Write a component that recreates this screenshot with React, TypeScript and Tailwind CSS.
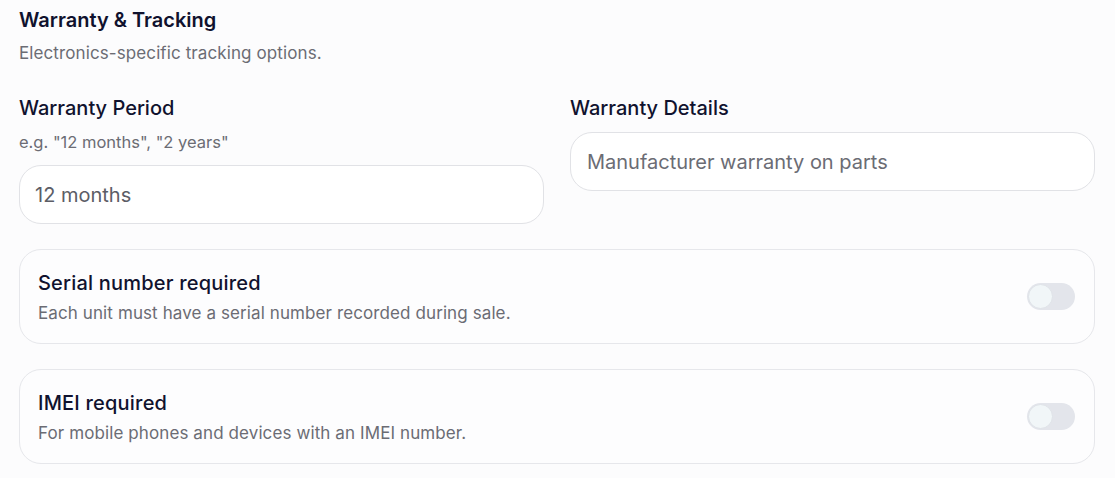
import React from "react";

function Toggle() {
  return (
    <div className="w-[48px] h-[27px] rounded-full bg-[#e3e5eb] p-[1px] flex items-center shrink-0">
      <div className="w-[25px] h-[25px] rounded-full bg-[#f1f6f8] border border-[#dfe3e8]" />
    </div>
  );
}

function ToggleCard({ title, desc }: { title: string; desc: string }) {
  return (
    <div className="h-[95px] rounded-[22px] border border-[#e6e7eb] bg-[#fdfdfe] flex items-center justify-between pl-[18px] pr-[19px]">
      <div className="flex flex-col">
        <div className="text-[20px] leading-[28px] font-medium text-[#10122e] tracking-[0.01em]">{title}</div>
        <div className="text-[17px] leading-[24px] text-[#6b6c74] mt-[4px] tracking-[0.006em]">{desc}</div>
      </div>
      <Toggle />
    </div>
  );
}

export default function App() {
  return (
    <div
      className="w-[1115px] h-[478px] bg-[#fcfcfd] pl-[19px] pr-[20px] pt-[6px] overflow-hidden"
      style={{ fontFamily: "Inter, 'Noto Sans', sans-serif" }}
    >
      <div className="text-[20px] leading-[28px] font-semibold text-[#10122e]">Warranty &amp; Tracking</div>
      <div className="text-[17px] leading-[24px] text-[#6b6c74] mt-[7px] tracking-[0.006em]">Electronics-specific tracking options.</div>

      <div className="grid grid-cols-2 gap-x-[26px] mt-[29px]">
        <div className="flex flex-col">
          <div className="text-[20px] leading-[28px] font-medium text-[#10122e]">Warranty Period</div>
          <div className="text-[16.5px] leading-[24px] text-[#6b6c74] mt-[8px]">e.g. "12 months", "2 years"</div>
          <div className="mt-[11px] h-[59px] rounded-[22px] border border-[#e1e2e6] bg-white flex items-center px-[15px] text-[20px] text-[#5c5d66]">
            12 months
          </div>
        </div>
        <div className="flex flex-col">
          <div className="text-[20px] leading-[28px] font-medium text-[#10122e]">Warranty Details</div>
          <div className="mt-[10px] h-[59px] rounded-[22px] border border-[#e1e2e6] bg-white flex items-center px-[16px] text-[20px] text-[#6b6c74]">
            Manufacturer warranty on parts
          </div>
        </div>
      </div>

      <div className="flex flex-col gap-[25px] mt-[25px]">
        <ToggleCard title="Serial number required" desc="Each unit must have a serial number recorded during sale." />
        <ToggleCard title="IMEI required" desc="For mobile phones and devices with an IMEI number." />
      </div>
    </div>
  );
}
